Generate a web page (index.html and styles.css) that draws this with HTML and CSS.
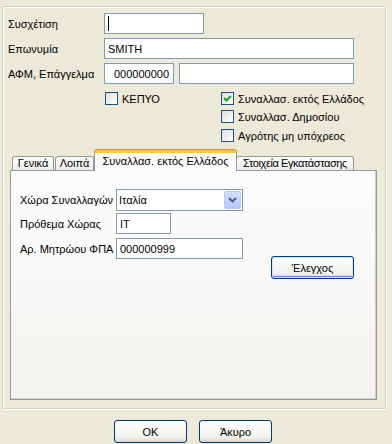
FILE: index.html
```html
<!DOCTYPE html>
<html lang="el">
<head>
    <meta charset="UTF-8">
    <title>Στοιχεία Συναλλασσόμενου</title>
    <link rel="stylesheet" href="styles.css">
</head>
<body>

<div class="dialog">
    <div class="frame">
        <div class="fields">
            <div class="row">
                <span class="label">Συσχέτιση</span>
                <div class="edit w-rel"><span class="caret"></span></div>
            </div>
            <div class="row">
                <span class="label">Επωνυμία</span>
                <div class="edit w-name">SMITH</div>
            </div>
            <div class="row">
                <span class="label">ΑΦΜ, Επάγγελμα</span>
                <div class="edit w-afm num">000000000</div>
                <div class="edit w-job"></div>
            </div>
        </div>

        <div class="checks">
            <div class="check-col">
                <label class="check"><span class="box"></span>ΚΕΠΥΟ</label>
            </div>
            <div class="check-col">
                <label class="check"><span class="box checked">
                    <svg width="11" height="11" viewBox="0 0 11 11"><polyline points="2,5 4.5,7.5 9,3" fill="none" stroke="#21a121" stroke-width="2"/></svg>
                </span>Συναλλασ. εκτός Ελλάδος</label>
                <label class="check second"><span class="box"></span>Συναλλασ. Δημοσίου</label>
                <label class="check third"><span class="box"></span>Αγρότης μη υπόχρεος</label>
            </div>
        </div>

        <div class="tabs">
            <div class="tab-strip">
                <div class="tab t-general">Γενικά</div>
                <div class="tab t-other">Λοιπά</div>
                <div class="tab active">Συναλλασ. εκτός Ελλάδος</div>
                <div class="tab t-install">Στοιχεία Εγκατάστασης</div>
            </div>
            <div class="tab-panel">
                <div class="row combo-row">
                    <span class="label">Χώρα Συναλλαγών</span>
                    <div class="combo">
                        <span class="combo-text">Ιταλία</span>
                        <span class="combo-btn">
                            <svg width="9" height="6" viewBox="0 0 9 6"><polyline points="1,1 4.5,4.5 8,1" fill="none" stroke="#4d6185" stroke-width="2"/></svg>
                        </span>
                    </div>
                </div>
                <div class="row prefix-row">
                    <span class="label">Πρόθεμα Χώρας</span>
                    <div class="edit w-prefix">IT</div>
                </div>
                <div class="row vat-row">
                    <span class="label">Αρ. Μητρώου ΦΠΑ</span>
                    <div class="edit w-vat">000000999</div>
                </div>
                <div class="check-btn-row">
                    <button class="btn default w-check">Έλεγχος</button>
                </div>
            </div>
        </div>
    </div>

    <div class="buttons">
        <button class="btn w-ok">OK</button>
        <button class="btn w-ok">Άκυρο</button>
    </div>
</div>

</body>
</html>
```

FILE: styles.css
```css
body {
    margin: 0;
    background-color: #ece9d8;
    font-family: "Liberation Sans", Arial, sans-serif;
    font-size: 11px;
    color: #000;
}

.dialog {
    width: 392px;
    height: 444px;
    overflow: hidden;
}

.frame {
    box-sizing: border-box;
    width: 384px;
    height: 403px;
    margin: 6px 0 0 2px;
    padding: 6px 5px 0 5px;
    border: 1px solid #d0d0bf;
    box-shadow: inset 1px 1px 0 #fff, 1px 1px 0 #fff;
}

.fields {
    display: flex;
    flex-direction: column;
    gap: 4px;
}

.row {
    display: flex;
    align-items: center;
    height: 21px;
}

.label {
    width: 96px;
    flex-shrink: 0;
}

.edit {
    box-sizing: border-box;
    height: 21px;
    padding: 0 3px;
    border: 1px solid #7f9db9;
    background-color: #fff;
    display: flex;
    align-items: center;
}

.caret {
    width: 1px;
    height: 15px;
    background-color: #000;
}

.w-rel { width: 100px; }
.w-name { width: 250px; }
.w-afm { width: 70px; margin-right: 5px; }
.w-job { width: 175px; }
.num { justify-content: flex-end; padding-right: 4px; }

.checks {
    display: flex;
    margin: 8px 0 0 97px;
}

.check-col {
    display: flex;
    flex-direction: column;
}

.check-col:first-child {
    width: 116px;
}

.check {
    display: flex;
    align-items: center;
    height: 13px;
    gap: 4px;
}

.check.second { margin-top: 5px; }
.check.third { margin-top: 6px; }

.box {
    box-sizing: border-box;
    width: 13px;
    height: 13px;
    border: 1px solid #1c5180;
    background: linear-gradient(135deg, #dcdcd7, #ffffff);
    display: flex;
    align-items: center;
    justify-content: center;
}

.tabs {
    margin: 8px 3px 0 2px;
}

.tab-strip {
    display: flex;
    align-items: flex-end;
    height: 20px;
    padding-left: 2px;
    position: relative;
    z-index: 1;
}

.tab {
    box-sizing: border-box;
    height: 14px;
    margin-right: 1px;
    border: 1px solid #919b9c;
    border-bottom: none;
    border-radius: 3px 3px 0 0;
    background: linear-gradient(#ffffff, #ecebe6);
    line-height: 13px;
    text-align: center;
    white-space: nowrap;
}

.t-general { width: 42px; }
.t-other { width: 39px; }
.t-install { width: 118px; letter-spacing: -0.4px; }

.tab.active {
    width: 143px;
    height: 21px;
    margin: 0 -1px -1px -1px;
    padding-top: 2px;
    border-top: 3px solid #ffc83c;
    box-shadow: 0 -1px 0 #e68b2c;
    background: #fcfcfe;
    line-height: 12px;
}

.tab.active + .tab {
    margin-left: 0;
}

.tab-panel {
    box-sizing: border-box;
    height: 230px;
    padding: 18px 0 0 9px;
    border: 1px solid #919b9c;
    box-shadow: inset -1px -1px 0 #d0cec3;
    background: linear-gradient(#fcfcfe, #f4f3ee);
}

.combo-row { height: 22px; }
.prefix-row { margin-top: 2px; }
.vat-row { margin-top: 4px; }

.combo {
    box-sizing: border-box;
    width: 127px;
    height: 22px;
    border: 1px solid #7f9db9;
    background-color: #fff;
    display: flex;
    align-items: center;
    padding: 1px;
}

.combo-text {
    flex: 1;
    padding-left: 1px;
}

.combo-btn {
    box-sizing: border-box;
    width: 17px;
    height: 18px;
    border: 1px solid #b9ccf7;
    border-radius: 2px;
    background: linear-gradient(#d3e0fd, #b2c7f6);
    display: flex;
    align-items: center;
    justify-content: center;
}

.w-prefix { width: 55px; }
.w-vat { width: 127px; }

.check-btn-row {
    display: flex;
    justify-content: flex-end;
    margin: -3px 22px 0 0;
}

.btn {
    box-sizing: border-box;
    height: 23px;
    border: 1px solid #003c74;
    border-radius: 3px;
    background: linear-gradient(#ffffff, #f0f0ea 80%, #d6d0c5);
    font-family: "Liberation Sans", Arial, sans-serif;
    font-size: 11px;
    color: #000;
    padding: 0;
}

.btn.default {
    box-shadow: inset 0 0 0 1px #cee7ff, inset 0 -1px 0 1px #6982ee;
}

.w-check { width: 83px; }
.w-ok { width: 73px; }

.buttons {
    display: flex;
    justify-content: center;
    gap: 12px;
    margin-top: 11px;
    padding-right: 6px;
}
```
